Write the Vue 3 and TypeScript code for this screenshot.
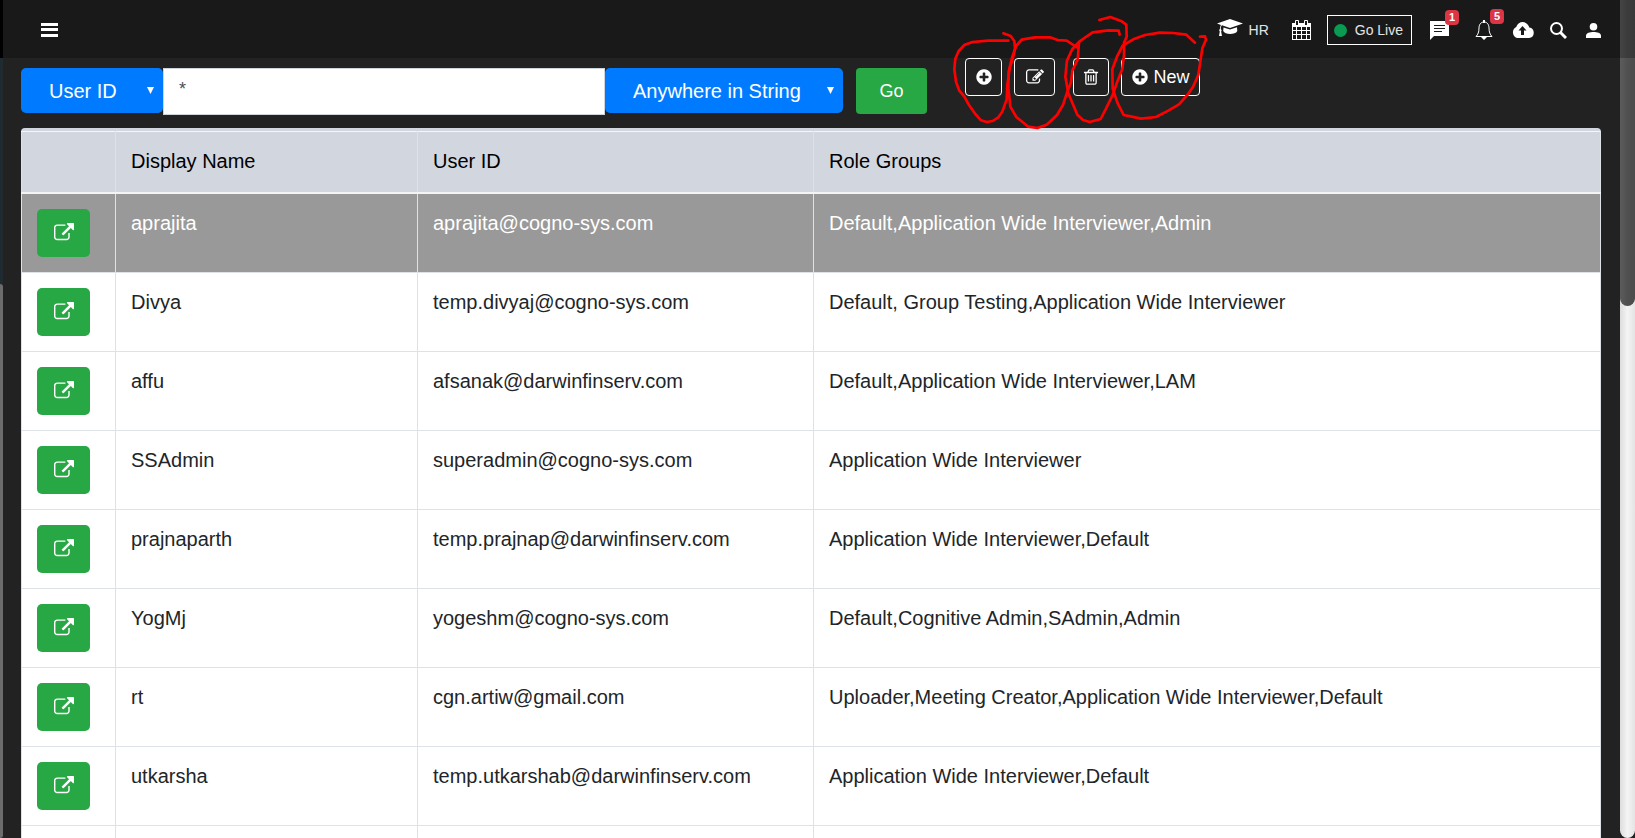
<script setup lang="ts">
import { ref } from 'vue'

interface UserRow {
  name: string
  id: string
  roles: string
}

const field = ref('User ID')
const match = ref('Anywhere in String')
const query = ref('*')
const selected = ref(0)

const users: UserRow[] = [
  { name: 'aprajita', id: 'aprajita@cogno-sys.com', roles: 'Default,Application Wide Interviewer,Admin' },
  { name: 'Divya', id: 'temp.divyaj@cogno-sys.com', roles: 'Default, Group Testing,Application Wide Interviewer' },
  { name: 'affu', id: 'afsanak@darwinfinserv.com', roles: 'Default,Application Wide Interviewer,LAM' },
  { name: 'SSAdmin', id: 'superadmin@cogno-sys.com', roles: 'Application Wide Interviewer' },
  { name: 'prajnaparth', id: 'temp.prajnap@darwinfinserv.com', roles: 'Application Wide Interviewer,Default' },
  { name: 'YogMj', id: 'yogeshm@cogno-sys.com', roles: 'Default,Cognitive Admin,SAdmin,Admin' },
  { name: 'rt', id: 'cgn.artiw@gmail.com', roles: 'Uploader,Meeting Creator,Application Wide Interviewer,Default' },
  { name: 'utkarsha', id: 'temp.utkarshab@darwinfinserv.com', roles: 'Application Wide Interviewer,Default' },
  { name: '', id: '', roles: '' },
]

const plusPath =
  'M1344 960v-128q0-26-19-45t-45-19h-256v-256q0-26-19-45t-45-19h-128q-26 0-45 19t-19 45v256h-256q-26 0-45 19t-19 45v128q0 26 19 45t45 19h256v256q0 26 19 45t45 19h128q26 0 45-19t19-45v-256h256q26 0 45-19t19-45zm320-64q0 209-103 385.5t-279.5 279.5-385.5 103-385.5-103-279.5-279.5-103-385.5 103-385.5 279.5-279.5 385.5-103 385.5 103 279.5 279.5 103 385.5z'
</script>

<template>
  <div class="app">
    <div class="edge-left" aria-hidden="true"><i class="edge-thumb"></i></div>
    <div class="page">
      <header class="topbar">
        <button class="icon-btn" aria-label="Menu">
          <svg width="17" height="14" viewBox="0 0 17 14" shape-rendering="crispEdges"><path d="M0 0h17v3H0zM0 5h17v3H0zM0 11h17v3H0z" /></svg>
        </button>
        <nav class="tools">
          <a class="hr" href="#">
            <svg width="26" height="18" viewBox="0 0 26 18"><path d="M13 0L26 4.500 13 9 5 6.300C4 7 3.800 8.500 3.800 10.200c1 .6 1 1.700.3 2.300L5 17H2l.8-4.600c-.8-.6-.8-1.800.1-2.300 0-1.600.3-3 1-4.200L0 4.500z" /><path d="M6.500 8.400L13 10.600 20 8.300l.3 3.700c-1 2.200-4 3-7.200 3-3 0-6-1-6.900-3z" /></svg>
            <span>HR</span>
          </a>
          <button class="icon-btn calendar" aria-label="Calendar">
            <svg width="19" height="20" viewBox="0 0 19 20"><path fill-rule="evenodd" d="M0 3h3V1q0-1 1-1h2q1 0 1 1v2h5V1q0-1 1-1h2q1 0 1 1v2h3v17H0zM4 1v4h2V1zm9 0v4h2V1zM1 7v3h3V7zm4 0v3h4V7zm5 0v3h4V7zm5 0v3h3V7zM1 11v3h3v-3zm4 0v3h4v-3zm5 0v3h4v-3zm5 0v3h3v-3zM1 15v4h3v-4zm4 0v4h4v-4zm5 0v4h4v-4zm5 0v4h3v-4z" /></svg>
          </button>
          <button class="live"><i class="dot"></i>Go Live</button>
          <button class="icon-btn chat" aria-label="Messages">
            <svg width="19" height="19" viewBox="0 0 19 19"><path fill-rule="evenodd" d="M0 0h19v15H4l-4 4zM4 4v1h11V4zm0 3v1h11V7zm0 3v1h8v-1z" /></svg>
            <span class="badge">1</span>
          </button>
          <button class="icon-btn bell" aria-label="Notifications">
            <svg width="18" height="20" viewBox="0 0 18 20"><path class="outline" d="M9 2C5.500 2 4 5 4 8c0 4-1 6.500-3 8.500h16C15 14.500 14 12 14 8c0-3-1.500-6-5-6z" /><path d="M8 0h2v3H8zM6 17h6l-3 3z" /></svg>
            <span class="badge">5</span>
          </button>
          <button class="icon-btn" aria-label="Upload">
            <svg width="23" height="16" viewBox="0 0 23 16"><path fill-rule="evenodd" d="M6 16a6 6 0 0 1-.8-11C6.500 1.500 9 0 11.500 0c3.500 0 6 2.500 6.800 5.500A5.300 5.300 0 0 1 18 16zM11.500 4L7.500 8.500H10V13h3V8.500h2.500z" /></svg>
          </button>
          <button class="icon-btn" aria-label="Search">
            <svg width="17" height="17" viewBox="0 0 17 17"><circle class="lens" cx="6.500" cy="6.500" r="5.500" /><path class="handle" d="M10.500 10.500L16 16" /></svg>
          </button>
          <button class="icon-btn person" aria-label="Account">
            <svg width="15" height="15" viewBox="0 0 15 15"><circle cx="7.500" cy="3.800" r="3.800" /><path d="M0 15v-2.500C0 10 4 9 7.500 9S15 10 15 12.500V15z" /></svg>
          </button>
        </nav>
      </header>

      <main class="content">
        <form class="search" @submit.prevent>
          <div class="pick field">
            <select v-model="field" aria-label="Search field"><option>User ID</option><option>Display Name</option></select>
            <svg class="caret" width="7" height="7" viewBox="0 0 7 7"><path d="M0 0h7L3.500 7z" /></svg>
          </div>
          <input v-model="query" class="query" type="text" aria-label="Search text" />
          <div class="pick match">
            <select v-model="match" aria-label="Match type"><option>Anywhere in String</option><option>Starts With</option></select>
            <svg class="caret" width="7" height="7" viewBox="0 0 7 7"><path d="M0 0h7L3.500 7z" /></svg>
          </div>
          <button class="go" type="submit">Go</button>
          <div class="actions">
            <button type="button" class="act add" aria-label="Add"><svg width="18" height="18" viewBox="0 0 1792 1792"><path :d="plusPath" /></svg></button>
            <button type="button" class="act edit" aria-label="Edit"><svg width="18" height="18" viewBox="0 0 1792 1792"><path d="M888 1184l116-116-152-152-116 116v56h96v96h56zm440-720q-16-16-33 1l-350 350q-17 17-1 33t33-1l350-350q17-17 1-33zm80 594v190q0 119-84.5 203.5t-203.5 84.5h-832q-119 0-203.5-84.5t-84.5-203.5v-832q0-119 84.5-203.5t203.5-84.5h832q63 0 117 25 15 7 18 23 3 17-9 29l-49 49q-14 14-32 8-23-6-45-6h-832q-66 0-113 47t-47 113v832q0 66 47 113t113 47h832q66 0 113-47t47-113v-126q0-13 9-22l64-64q15-15 35-7t20 29zm-96-738l288 288-672 672h-288v-288zm444 132l-92 92-288-288 92-92q28-28 68-28t68 28l152 152q28 28 28 68t-28 68z" /></svg></button>
            <button type="button" class="act trash" aria-label="Delete"><svg width="18" height="18" viewBox="0 0 1792 1792"><path d="M704 736v576q0 14-9 23t-23 9h-64q-14 0-23-9t-9-23v-576q0-14 9-23t23-9h64q14 0 23 9t9 23zm256 0v576q0 14-9 23t-23 9h-64q-14 0-23-9t-9-23v-576q0-14 9-23t23-9h64q14 0 23 9t9 23zm256 0v576q0 14-9 23t-23 9h-64q-14 0-23-9t-9-23v-576q0-14 9-23t23-9h64q14 0 23 9t9 23zm128 724v-948h-896v948q0 22 7 40.5t14.5 27 10.5 8.5h832q3 0 10.5-8.5t14.5-27 7-40.5zm-672-1076h448l-48-117q-7-9-17-11h-317q-10 2-17 11zm928 32v64q0 14-9 23t-23 9h-96v948q0 83-47 143.5t-113 60.5h-832q-66 0-113-58.5t-47-141.5v-952h-96q-14 0-23-9t-9-23v-64q0-14 9-23t23-9h309l70-167q15-37 54-63t79-26h320q40 0 79 26t54 63l70 167h309q14 0 23 9t9 23z" /></svg></button>
            <button type="button" class="act new"><svg width="18" height="18" viewBox="0 0 1792 1792"><path :d="plusPath" /></svg>New</button>
            <svg class="marks" width="290" height="140" viewBox="0 0 870 420" aria-hidden="true">
              <path d="M205 122L145 122 98 126 74 134 56 153 46 176 43 208 48 245 58 272 73 290 87 315 106 342 123 361 140 366 158 363 175 352 187 335 200 298 202 255 209 205 219 173 225 145 223 123 212 108 190 100" />
              <path d="M414 144L380 122 353 120 330 112 285 112 245 119 229 137 217 170 206 215 205 265 211 320 229 351 265 380 292 384 320 374 351 345 369 315 382 275 393 247 397 212 413 179 417 128" />
              <path d="M539 104L536 92 505 91 458 97 420 123 397 147 381 182 376 230 385 280 402 320 412 344 429 360 449 366 482 357 498 326 518 285 532 245 547 207 552 165 552 128 560 110 559 74 545 64 511 51 478 60" />
              <path d="M765 128L739 104 700 99 660 98 615 105 580 118 548 137 531 170 517 208 518 265 533 310 551 345 575 350 603 356 648 351 685 332 717 313 742 285 759 261 775 225 781 185 787 145 798 119 795 109 780 110" />
            </svg>
          </div>
        </form>

        <div class="grid">
          <table>
            <colgroup><col class="c-open" /><col class="c-name" /><col class="c-id" /><col /></colgroup>
            <thead>
              <tr><th aria-label="Open"></th><th>Display Name</th><th>User ID</th><th>Role Groups</th></tr>
            </thead>
            <tbody>
              <tr v-for="(u, i) in users" :key="i" :class="{ active: i === selected }" @click="selected = i">
                <td>
                  <button class="open" aria-label="Open user"><svg width="20" height="20" viewBox="0 0 1792 1792"><path d="M1408 928v320q0 119-84.5 203.5t-203.5 84.5h-832q-119 0-203.5-84.5t-84.5-203.5v-832q0-119 84.5-203.5t203.5-84.5h704q14 0 23 9t9 23v64q0 14-9 23t-23 9h-704q-66 0-113 47t-47 113v832q0 66 47 113t113 47h832q66 0 113-47t47-113v-320q0-14 9-23t23-9h64q14 0 23 9t9 23zm384-864v512q0 26-19 45t-45 19-45-19l-176-176-652 652q-10 10-23 10t-23-10l-114-114q-10-10-10-23t10-23l652-652-176-176q-19-19-19-45t19-45 45-19h512q26 0 45 19t19 45z" /></svg></button>
                </td>
                <td>{{ u.name }}</td>
                <td>{{ u.id }}</td>
                <td>{{ u.roles }}</td>
              </tr>
            </tbody>
          </table>
        </div>
      </main>
    </div>
    <div class="scrollbar" aria-hidden="true"><i class="thumb"></i></div>
  </div>
</template>

<style>
html,
body {
  margin: 0;
  overflow: hidden;
  background: #222;
}
</style>

<style scoped>
* {
  box-sizing: border-box;
}
.app {
  display: flex;
  height: 100vh;
  overflow: hidden;
  background: #222;
  font-family: 'Liberation Sans', Arial, sans-serif;
  font-size: 20px;
  color: #212529;
}
button,
select,
input {
  font-family: inherit;
  margin: 0;
}
svg {
  display: block;
  fill: #fff;
}
.edge-left {
  width: 3px;
  padding-top: 284px;
  background: linear-gradient(#000 58px, #1f2b30 58px);
}
.edge-thumb {
  display: block;
  height: 100%;
  border-radius: 0 3px 3px 0;
  background: #6c6c6c;
}
.page {
  flex: 1;
  min-width: 0;
}
.topbar {
  display: flex;
  align-items: center;
  justify-content: space-between;
  height: 58px;
  padding: 2px 19px 0 38px;
  background: #191919;
}
.icon-btn {
  position: relative;
  padding: 0;
  border: 0;
  background: none;
}
.tools {
  display: flex;
  align-items: center;
  gap: 16px;
  height: 56px;
}
.hr {
  display: flex;
  align-items: center;
  gap: 6px;
  margin-right: 7px;
  color: #e4e4e4;
  font-size: 14px;
  line-height: 18px;
  text-decoration: none;
}
.hr svg {
  margin-bottom: 4px;
}
.live {
  display: flex;
  align-items: center;
  gap: 8px;
  height: 30px;
  padding: 0 8px 0 6px;
  border: 1px solid #fff;
  background: none;
  color: #e4e4e4;
  font-size: 14px;
}
.dot {
  width: 13px;
  height: 13px;
  border-radius: 50%;
  background: #0a9a52;
}
.chat {
  margin-right: 10px;
}
.calendar {
  margin-right: 0;
}
.live {
  margin-right: 2px;
}
.bell {
  margin-right: 2px;
}
.person {
  margin-left: 3px;
}
.badge {
  position: absolute;
  left: 15px;
  top: -11px;
  width: 14px;
  height: 15px;
  border-radius: 4px;
  background: #dc3545;
  color: #fff;
  font-size: 11px;
  font-weight: 700;
  line-height: 15px;
  text-align: center;
}
.outline,
.lens,
.handle {
  fill: none;
  stroke: #fff;
  stroke-width: 2;
}
.outline {
  stroke-width: 1;
}
.handle {
  stroke-width: 3;
}
.content {
  padding: 10px 19px 0 18px;
}
.search {
  display: flex;
  align-items: flex-start;
  height: 60px;
}
.pick {
  position: relative;
}
.pick select {
  appearance: none;
  display: block;
  width: 100%;
  height: 45px;
  padding: 0 28px;
  border: 0;
  border-radius: 5px;
  background: #007bff;
  color: #fff;
  font-size: 20px;
}
.field {
  width: 142px;
}
.match {
  width: 238px;
}
.caret {
  position: absolute;
  right: 9px;
  top: 19px;
  pointer-events: none;
}
.query {
  width: 442px;
  height: 47px;
  padding: 0 15px 4px;
  border: 1px solid #ced4da;
  background: #fff;
  color: #495057;
  font-size: 18px;
}
.go {
  width: 71px;
  height: 46px;
  margin-left: 13px;
  border: 0;
  border-radius: 4px;
  background: #28a745;
  color: #fff;
  font-size: 18px;
}
.actions {
  position: relative;
  display: flex;
  margin: -10px 0 0 38px;
}
.act {
  display: flex;
  align-items: center;
  justify-content: center;
  gap: 4px;
  width: 37px;
  height: 38px;
  padding: 0;
  border: 1px solid #fff;
  border-radius: 4px;
  background: none;
  color: #fff;
  font-size: 18px;
}
.edit {
  width: 41px;
  margin-left: 12px;
}
.trash {
  width: 36px;
  margin-left: 18px;
}
.new {
  width: 79px;
  margin-left: 12px;
}
.marks {
  position: absolute;
  left: -25px;
  top: -58px;
  pointer-events: none;
}
.marks path {
  fill: none;
  stroke: #f00;
  stroke-width: 8;
  stroke-linecap: round;
  stroke-linejoin: round;
}
.grid {
  padding-top: 3px;
  border-radius: 4px 4px 0 0;
  background: #d2d6df;
}
table {
  width: 100%;
  border-collapse: collapse;
  table-layout: fixed;
  background: #fff;
}
.c-open {
  width: 94px;
}
.c-name {
  width: 302px;
}
.c-id {
  width: 396px;
}
th,
td {
  padding: 15px;
  border: 1px solid #dee2e6;
  line-height: 29px;
  text-align: left;
  vertical-align: top;
  font-weight: 400;
  white-space: nowrap;
}
th {
  height: 61px;
  border-top-color: #f4f6f8;
  border-bottom: 2px solid #f4f4f4;
  background: #d2d6df;
  color: #000;
}
td {
  height: 79px;
}
.active {
  background: #999;
  color: #fff;
}
.open {
  display: flex;
  align-items: center;
  justify-content: center;
  width: 53px;
  height: 48px;
  padding: 0;
  border: 0;
  border-radius: 5px;
  background: #28a745;
}
.scrollbar {
  width: 15px;
  border-radius: 0 0 8px 8px;
  background: linear-gradient(90deg, #ddd, #f4f4f4 50%, #e4e4e4);
}
.thumb {
  display: block;
  height: 306px;
  border-radius: 0 0 8px 8px;
  background: linear-gradient(rgba(0, 0, 0, 0.26) 58px, transparent 58px), linear-gradient(90deg, #5c5c5c, #505050 50%, #4c4c4c);
}
</style>
